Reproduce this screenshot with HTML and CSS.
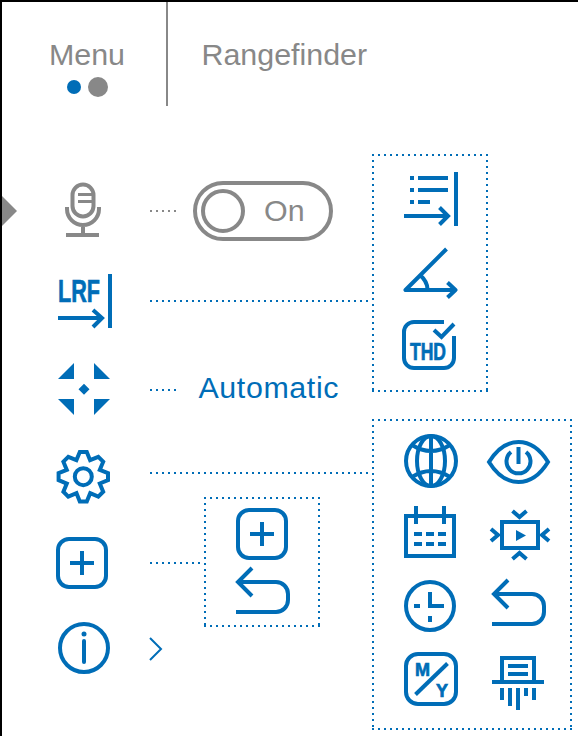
FILE: index.html
```html
<!DOCTYPE html>
<html lang="en">
<head>
  <meta charset="UTF-8">
  <title>Menu - Rangefinder</title>
  <link rel="stylesheet" href="styles.css">
</head>
<body>
  <div class="page">
    <header class="tabs">
      <div class="tab-menu">
        <div class="tab-title">Menu</div>
        <div class="pager">
          <span class="dot dot-small"></span>
          <span class="dot dot-big"></span>
        </div>
      </div>
      <div class="tab-range tab-title">Rangefinder</div>
    </header>

    <!-- pointer for the selected row -->
    <div class="pointer"></div>

    <!-- main menu icons -->
    <div class="main-icons">
      <svg class="cell gray" viewBox="54 181 60 60">
        <rect x="72.500" y="184.500" width="21" height="32" rx="10.500"/>
        <path d="M78 194.500H93M78 201.500H93" stroke-width="3"/>
        <path d="M67 207v2a16 16 0 0 0 32 0v-2M83 225v9M66 235H99"/>
      </svg>
      <svg class="cell" viewBox="54 269 60 60">
        <text class="glyph glyph-heavy" x="58" y="302" font-size="32" textLength="42" lengthAdjust="spacingAndGlyphs">LRF</text>
        <path d="M58 318H101.500M93 310L102 318L93 327M110 274V328"/>
      </svg>
      <svg class="cell" viewBox="54 357 60 60">
        <path class="solid" d="M74 363V379H58ZM94 363V379H110ZM58 399H74V415ZM110 399H94V415ZM84 383.800L89.500 389.300L84 394.800L78.500 389.300Z"/>
      </svg>
      <svg class="cell" viewBox="54 445 60 60">
        <circle cx="83.300" cy="476.700" r="8.500"/>
        <path transform="translate(83.300 476.700)" d="M-3.500 -24.700L3.500 -24.700L6.800 -16.500L15 -19.900L19.900 -15L16.500 -6.900L24.700 -3.500L24.700 3.500L16.500 6.800L19.900 15L15 19.900L6.900 16.500L3.500 24.700L-3.500 24.700L-6.800 16.500L-15 19.900L-19.900 15L-16.500 6.900L-24.700 3.500L-24.700 -3.500L-16.500 -6.800L-19.900 -15L-15 -19.900L-6.900 -16.500Z"/>
      </svg>
      <svg class="cell" viewBox="54 533 60 60">
        <rect x="58" y="539" width="48" height="48" rx="11"/>
        <path d="M70 563H94M82 551V575"/>
      </svg>
      <svg class="cell" viewBox="54 621 60 60">
        <circle cx="84" cy="648" r="24"/>
        <circle class="solid" cx="84" cy="634" r="2.500"/>
        <path d="M84 641V662" stroke-linecap="round"/>
      </svg>
    </div>

    <!-- links from the rows to their sub menus -->
    <div class="leader leader-mic"></div>
    <div class="leader leader-lrf"></div>
    <div class="leader leader-auto"></div>
    <div class="leader leader-gear"></div>
    <div class="leader leader-plus"></div>

    <div class="switch">
      <span class="knob"></span>
      <span class="switch-label">On</span>
    </div>
    <div class="auto-label">Automatic</div>

    <svg class="chevron" viewBox="146 634 20 30">
      <path d="M150 638L161 649L150 660" stroke-width="2"/>
    </svg>

    <!-- rangefinder sub menu -->
    <div class="dotbox box-lrf">
      <svg class="cell-tall" viewBox="400 166 60 70">
        <path d="M410 178H414M418 178H448M410 190H414M418 190H448M410 202H414M418 202H430M404 216H447M439.500 207.500L448 216L439.500 224.500M456 172V226"/>
      </svg>
      <svg class="cell-tall" viewBox="400 236 60 70">
        <path stroke-linejoin="round" d="M446.500 249L405.500 290H455M447.500 282.500L455.500 290L447.500 297.500M420 275Q427 281 427.500 289"/>
      </svg>
      <svg class="cell-tall" viewBox="400 306 60 70">
        <path d="M444 322H414a10 10 0 0 0 -10 10v26a10 10 0 0 0 10 10h30a10 10 0 0 0 10 -10V336"/>
        <path d="M434 330L441.500 337L454 324"/>
        <text class="glyph glyph-heavy" x="410" y="360" font-size="23" textLength="36" lengthAdjust="spacingAndGlyphs">THD</text>
      </svg>
    </div>

    <!-- add profile sub menu -->
    <div class="dotbox box-plus">
      <svg class="cell-plus" viewBox="232 502 60 62">
        <rect x="238" y="510" width="48" height="48" rx="11"/>
        <path d="M250 534H274M262 522V546"/>
      </svg>
      <svg class="cell-back" viewBox="232 564 60 56">
        <path d="M252 568L238 582L252 596M238 582H276a12 12 0 0 1 12 12V600a12 12 0 0 1 -12 12H236"/>
      </svg>
    </div>

    <!-- general settings sub menu -->
    <div class="dotbox box-settings">
      <svg class="cell-wide" viewBox="395 425 70 72">
        <circle cx="431" cy="461" r="25"/>
        <ellipse cx="431" cy="461" rx="14" ry="25"/>
        <path d="M431 436V486M412 445Q431 457 450 445M412 477Q431 465 450 477"/>
      </svg>
      <svg class="cell-wide" viewBox="483 425 70 72">
        <path d="M489 462C497 449 507 442 518.500 442C530 442 540 449 548 462C540 475 530 482 518.500 482C507 482 497 475 489 462Z"/>
        <path d="M511 452A12 12 0 1 0 526 452M518.500 447V464"/>
      </svg>
      <svg class="cell-wide" viewBox="395 497 70 72">
        <rect x="406" y="516" width="48" height="40"/>
        <path d="M416 506V524M444 506V524M414 534H422M426 534H434M438 534H446M414 544H422M426 544H434M438 544H446"/>
      </svg>
      <svg class="cell-wide" viewBox="483 497 70 72">
        <rect x="502" y="522" width="36" height="26"/>
        <path class="solid" d="M516 530L526 535.500L516 541Z"/>
        <path d="M512.500 511L519.500 517L526.500 511M512.500 559L519.500 553L526.500 559M491 529L498 535L491 541M549 529L542 535L549 541"/>
      </svg>
      <svg class="cell-wide" viewBox="395 569 70 72">
        <circle cx="430" cy="606" r="24"/>
        <path d="M430 592V606M428 606H444M414 606H420M430 616V622"/>
      </svg>
      <svg class="cell-wide" viewBox="483 569 70 72">
        <path d="M508 580L494 594L508 608M494 594H532a12 12 0 0 1 12 12V612a12 12 0 0 1 -12 12H492"/>
      </svg>
      <svg class="cell-wide" viewBox="395 641 70 72">
        <rect x="406" y="654" width="50" height="50" rx="12"/>
        <path d="M447.500 663.500L415.500 694.500"/>
        <text class="glyph glyph-heavy" x="415" y="675.500" font-size="18">M</text>
        <text class="glyph glyph-heavy" x="436" y="696.500" font-size="18">Y</text>
      </svg>
      <svg class="cell-wide" viewBox="483 641 70 72">
        <path d="M502 682V658H534V682M492 682H544M508 666H528M508 674H528M502 688V700M510 688V706M518 688V710M526 688V696M534 688V700"/>
      </svg>
    </div>
  </div>
</body>
</html>
```

FILE: styles.css
```css
:root {
  --blue: #006db7;
  --gray: #888;
}
html, body {
  margin: 0; padding: 0;
  background: #fff;
}
.page {
  position: relative;
  width: 578px;
  height: 736px;
  overflow: hidden;
  box-shadow: inset 2px 2px 0 #000;
  font-family: 'Liberation Sans', Arial, sans-serif;
  color: var(--gray);
}
svg {
  display: block;
  fill: none;
  stroke: var(--blue);
  stroke-width: 4;
  overflow: visible;
}
svg.gray { stroke: var(--gray); }
svg .solid {
  fill: var(--blue);
  stroke: none;
}
svg .glyph {
  fill: var(--blue);
  stroke: none;
  font-weight: 700;
}
svg .glyph-heavy {
  stroke: var(--blue);
  stroke-width: 0.7;
}

/* header */
.tabs {
  display: flex;
  height: 104px;
  margin-top: 2px;
}
.tab-title {
  font-size: 30.4px;
  line-height: 34px;
}
.tab-menu {
  width: 76px;
  padding: 35px 41px 0 49px;
  border-right: 2px solid var(--gray);
  display: flex;
  flex-direction: column;
  align-items: center;
}
.tab-range {
  padding: 35px 0 0 33.500px;
}
.pager {
  display: flex;
  align-items: center;
  gap: 7px;
  margin-top: 6px;
}
.dot {
  display: block;
  border-radius: 50%;
}
.dot-small {
  width: 14px;
  height: 14px;
  background: var(--blue);
}
.dot-big {
  width: 20px;
  height: 20px;
  background: var(--gray);
}

.pointer {
  position: absolute;
  left: 2px;
  top: 196px;
  border-left: 15px solid var(--gray);
  border-top: 15px solid transparent;
  border-bottom: 15px solid transparent;
}

/* main icons */
.main-icons {
  position: absolute;
  left: 54px;
  top: 167px;
  display: grid;
  grid-template-rows: repeat(6, 88px);
  place-items: center;
}
.cell {
  width: 60px;
  height: 60px;
}

/* leaders */
.leader {
  position: absolute;
  left: 150px;
  height: 2px;
  background: repeating-linear-gradient(90deg, var(--blue) 0 2px, transparent 2px 6px);
}
.leader-mic {
  top: 210px;
  width: 26px;
  background: repeating-linear-gradient(90deg, var(--gray) 0 2px, transparent 2px 6px);
}
.leader-lrf { top: 300px; width: 222px; }
.leader-auto { top: 389px; width: 26px; }
.leader-gear { top: 472px; width: 222px; }
.leader-plus { top: 562px; width: 54px; }

/* values */
.switch {
  position: absolute;
  left: 193px;
  top: 181px;
  box-sizing: border-box;
  width: 140px;
  height: 60px;
  padding-left: 4px;
  border: 4px solid var(--gray);
  border-radius: 30px;
  display: flex;
  align-items: center;
  gap: 19px;
}
.knob {
  box-sizing: border-box;
  width: 44px;
  height: 44px;
  border: 4px solid var(--gray);
  border-radius: 50%;
}
.switch-label {
  font-size: 30.4px;
  line-height: 34px;
  margin-bottom: 2px;
}
.auto-label {
  position: absolute;
  left: 198.500px;
  top: 370px;
  font-size: 30.4px;
  line-height: 34px;
  letter-spacing: 0.6px;
  color: var(--blue);
}
.chevron {
  position: absolute;
  left: 146px;
  top: 634px;
  width: 20px;
  height: 30px;
}

/* sub menus */
.dotbox {
  position: absolute;
  box-sizing: border-box;
  background:
    repeating-linear-gradient(90deg, var(--blue) 0 2px, transparent 2px 6px) left top / 100% 2px no-repeat,
    repeating-linear-gradient(90deg, var(--blue) 0 2px, transparent 2px 6px) left bottom / 100% 2px no-repeat,
    repeating-linear-gradient(180deg, var(--blue) 0 2px, transparent 2px 6px) left top / 2px 100% no-repeat,
    repeating-linear-gradient(180deg, var(--blue) 0 2px, transparent 2px 6px) right top / 2px 100% no-repeat;
}
.box-lrf {
  left: 372px;
  top: 154px;
  width: 116px;
  height: 238px;
  padding-top: 12px;
  display: flex;
  flex-direction: column;
  align-items: center;
}
.cell-tall {
  width: 60px;
  height: 70px;
}
.box-plus {
  left: 204px;
  top: 497px;
  width: 116px;
  height: 130px;
  padding-top: 5px;
  display: flex;
  flex-direction: column;
  align-items: center;
}
.cell-plus {
  width: 60px;
  height: 62px;
}
.cell-back {
  width: 60px;
  height: 56px;
}
.box-settings {
  left: 372px;
  top: 419px;
  width: 200px;
  height: 311px;
  padding: 6px 0 0 23px;
  display: grid;
  grid-template-columns: 70px 70px;
  grid-auto-rows: 72px;
  column-gap: 18px;
}
.cell-wide {
  width: 70px;
  height: 72px;
}
```
